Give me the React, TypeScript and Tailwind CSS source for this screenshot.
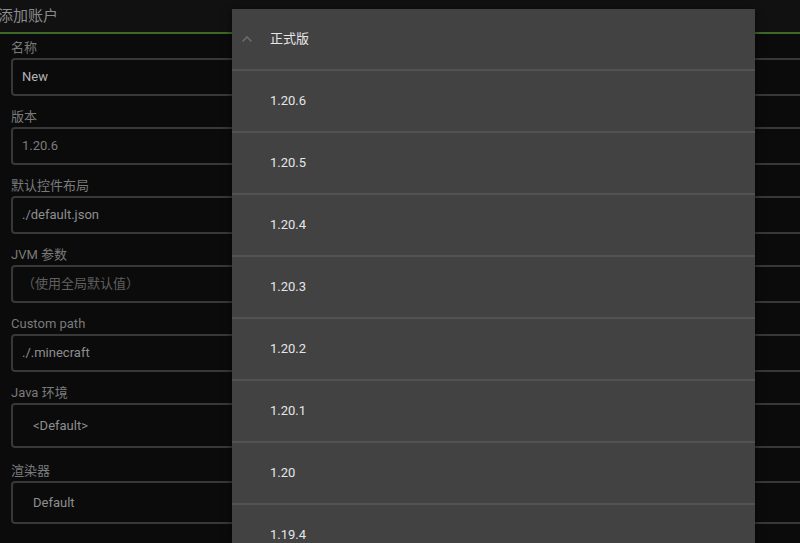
import React from 'react';

const font = { fontFamily: 'Roboto, "Noto Sans CJK SC", sans-serif' };

type Field = { label: string; value: string; tone: string };

const fields: Field[] = [
  { label: '名称', value: 'New', tone: 'text-[#b4b4b4]' },
  { label: '版本', value: '1.20.6', tone: 'text-[#7c7c7c]' },
  { label: '默认控件布局', value: './default.json', tone: 'text-[#8e8e8e]' },
  { label: 'JVM 参数', value: '（使用全局默认值）', tone: 'text-[#5f5f5f]' },
  { label: 'Custom path', value: './.minecraft', tone: 'text-[#8e8e8e]' },
];

const versions = ['1.20.6', '1.20.5', '1.20.4', '1.20.3', '1.20.2', '1.20.1', '1.20', '1.19.4'];

function TextField({ label, value, tone }: Field) {
  return (
    <div className="mb-[13px]">
      <div className="h-4 text-[13px] leading-4 text-[#7a7a7a]">{label}</div>
      <div className="mt-[2px] h-[38px] -mr-6 flex items-center rounded-[4px] border-2 border-[#383838] pl-[9px]">
        <span className={`text-[13px] ${tone}`}>{value}</span>
      </div>
    </div>
  );
}

function Spinner({ label, value, height }: { label: string; value: string; height: string }) {
  return (
    <div>
      <div className="h-4 text-[13px] leading-4 text-[#7a7a7a]">{label}</div>
      <div className={`mt-[2px] ${height} -mr-6 flex items-center rounded-[4px] border-2 border-[#383838] pl-5`}>
        <span className="text-[13px] text-[#8e8e8e]">{value}</span>
      </div>
    </div>
  );
}

export default function App() {
  return (
    <div className="relative w-[800px] h-[543px] overflow-hidden bg-[#0b0b0b]" style={font}>
      {/* Title bar */}
      <div className="h-8 bg-[#111111] flex items-center">
        <span className="-ml-[2px] text-[15px] text-[#8a8a8a]">添加账户</span>
      </div>
      <div className="h-[2px] bg-[#3d6a28]" />

      {/* Form */}
      <div className="pl-[11px] pt-[6px]">
        {fields.map((f) => (
          <TextField key={f.label} {...f} />
        ))}
        <Spinner label="Java 环境" value="<Default>" height="h-[45px]" />
        <div className="mt-[15px]">
          <Spinner label="渲染器" value="Default" height="h-[43px]" />
        </div>
      </div>

      {/* Version dropdown */}
      <div className="absolute left-[232px] top-[9px] bottom-0 w-[523px] bg-[#424242] shadow-[0_2px_8px_rgba(0,0,0,0.6)]">
        <div className="h-[62px] border-b-2 border-[#525252] flex items-center">
          <svg width="12" height="8" viewBox="0 0 12 8" className="ml-[9px]">
            <path d="M1.5 6.5 L6 2 L10.5 6.5" fill="none" stroke="#6a6a6a" strokeWidth="1.6" />
          </svg>
          <span className="ml-[17px] text-[13px] text-[#e6e6e6]">正式版</span>
        </div>
        {versions.map((v) => (
          <div key={v} className="h-[62px] border-b-2 border-[#525252] flex items-center">
            <span className="ml-[38px] text-[13px] text-[#e6e6e6]">{v}</span>
          </div>
        ))}
      </div>
    </div>
  );
}
